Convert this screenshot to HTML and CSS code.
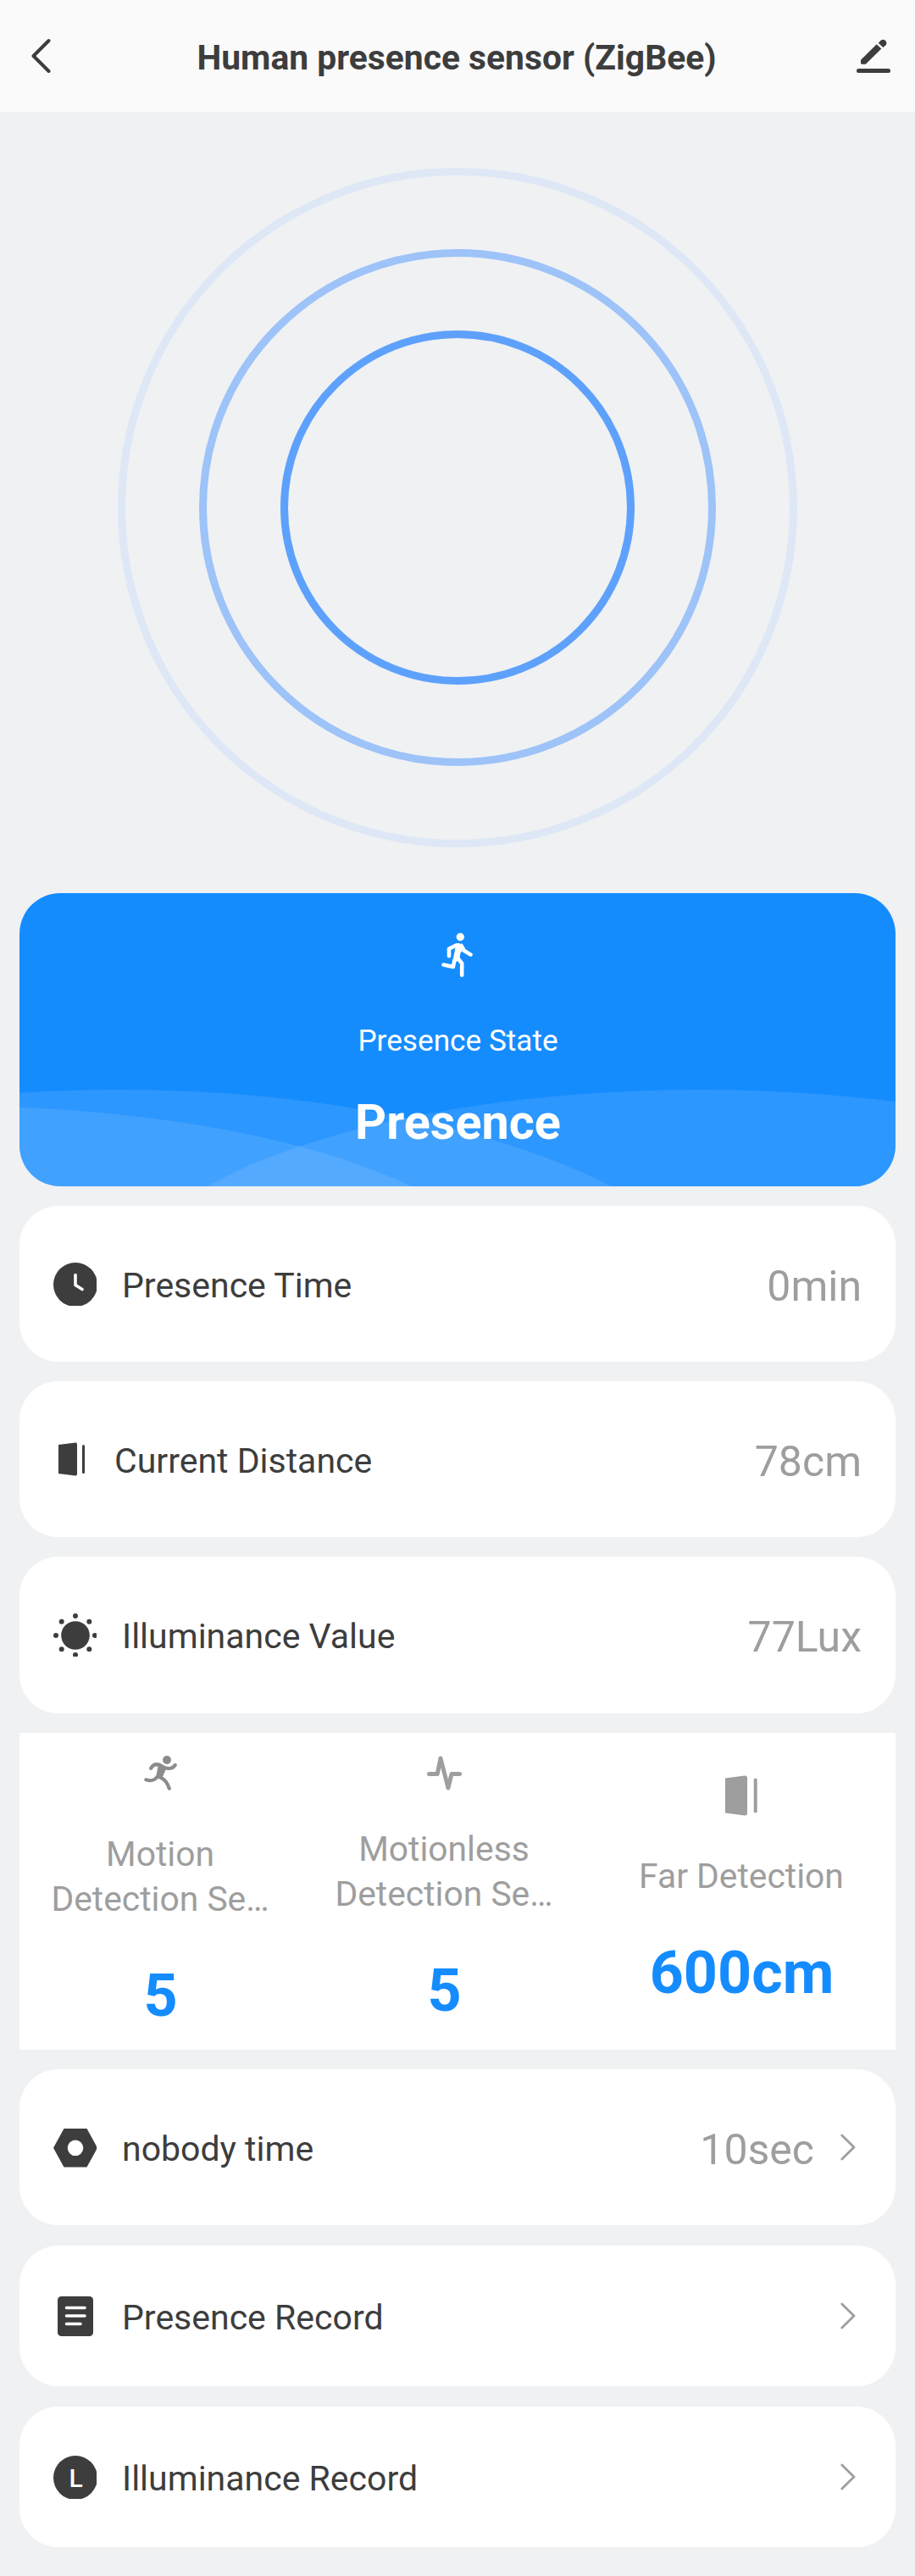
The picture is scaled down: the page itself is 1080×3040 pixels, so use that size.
FILE: index.html
```html
<!DOCTYPE html>
<html lang="en">
<head>
<meta charset="utf-8">
<title>Human presence sensor (ZigBee)</title>
<link rel="stylesheet" href="styles.css">
</head>
<body>
<header class="topbar">
  <svg class="back" viewBox="0 0 24 42" width="24" height="42"><path d="M21.5 3 3.5 21l18 18"/></svg>
  <h1 class="title">Human presence sensor (ZigBee)</h1>
  <svg class="edit" viewBox="0 0 40 40" width="40" height="40">
    <path d="M5 24.700 23.700 6.300l5.600 5.200L10.800 29.700H5.800l-.8-.8z"/>
    <path d="M25.700 4.700 28.600 1.700q3-2.300 5.600.400 2.500 2.700.100 5.500L31.400 10z"/>
    <rect x="0" y="35" width="40" height="5" rx="2.500"/>
  </svg>
</header>

<section class="radar">
  <div class="ring ring-outer"><div class="ring ring-middle"><div class="ring ring-inner"></div></div></div>
</section>

<main class="cards">
  <section class="state">
    <svg class="waves" viewBox="23 1054 1034 346" width="1034" height="346">
      <ellipse cx="141" cy="1590" rx="744" ry="304"/>
      <ellipse cx="826" cy="1529" rx="686" ry="243"/>
      <path d="M23 1306.700C200 1314 370 1345 485.500 1400H23z"/>
    </svg>
    <svg class="walker" viewBox="0 0 38 53" width="38" height="53">
      <circle cx="22.300" cy="4.700" r="4.700"/>
      <path class="limb" d="M16.500 15 9 18.800v8.500M23.500 15l3.500 6 7.500 4.600M15.500 32l-1.700 8-11.300-2.500M18.500 29l5.700 6.800V49.700"/>
      <path d="M15.500 13.200c4-2.200 7.800-1.200 9.200 2.300l1.300 4.500-3.500 3.500-.8 5.500-3.700 5h-4.700l3.200-17z"/>
    </svg>
    <p class="state-label">Presence State</p>
    <p class="state-value">Presence</p>
  </section>

  <section class="row">
    <svg class="icon" viewBox="0 0 51 51" width="51" height="51"><circle cx="26" cy="26" r="26"/><path class="cut" d="M26 14.500v12l8 5"/></svg>
    <span class="label">Presence Time</span><span class="value">0min</span>
  </section>

  <section class="row">
    <svg class="icon icon-door" viewBox="0 0 42 40" width="42" height="40"><path d="M6 3 26 .5q2-.2 2 2v35q0 2.200-2 2L6 37z"/><rect x="34" y="3" width="3" height="34" rx="1.500"/></svg>
    <span class="label">Current Distance</span><span class="value">78cm</span>
  </section>

  <section class="row row-illuminance">
    <svg class="icon" viewBox="0 0 51 51" width="51" height="51"><circle cx="26" cy="26" r="16.800"/><circle cx="26" cy="3" r="3"/><circle cx="3" cy="26" r="3"/><circle cx="49" cy="26" r="3"/><circle cx="26" cy="49" r="3"/><circle cx="9.700" cy="9.700" r="3"/><circle cx="42.300" cy="9.700" r="3"/><circle cx="9.700" cy="42.300" r="3"/><circle cx="42.300" cy="42.300" r="3"/></svg>
    <span class="label">Illuminance Value</span><span class="value">77Lux</span>
  </section>

  <section class="detection">
    <div class="metric metric-motion">
      <svg class="runner" viewBox="0 0 39 41" width="39" height="41">
        <circle cx="27" cy="5" r="5"/>
        <path class="limb" d="M8.200 14.800c2.500-4.600 6.800-5.300 11-3.600 6.500 4.300 13.500 5.800 17.500-.2M2.300 28.300c6 2 10 1.200 14-4M18.500 25.200c6.500 3 9 6.500 11.300 13.500"/>
        <path d="M17 10l9.500 4.500-5.500 12.500-7-1.500z"/>
      </svg>
      <p class="metric-name">Motion<br>Detection Se…</p>
      <p class="metric-value">5</p>
    </div>
    <div class="metric metric-motionless">
      <svg class="pulse" viewBox="0 0 41 41" width="41" height="41"><path d="M2.500 21.500h9.800L16 3l9 35 4-16.500h9.500"/></svg>
      <p class="metric-name">Motionless<br>Detection Se…</p>
      <p class="metric-value">5</p>
    </div>
    <div class="metric metric-far">
      <svg class="far" viewBox="0 0 38 48" width="38" height="48"><path d="M0 3.500 23 .5q3-.2 3 3v41q0 3.200-3 3L0 44.500z"/><rect x="33.700" y="3.500" width="4" height="41" rx="2"/></svg>
      <p class="metric-name">Far Detection</p>
      <p class="metric-value">600cm</p>
    </div>
  </section>

  <section class="row">
    <svg class="icon" viewBox="0 0 51 51" width="51" height="51"><path fill-rule="evenodd" d="M12.500 3h27L52 25.800 39.500 48.500h-27L0 25.800zM26 16.500a9.300 9.300 0 1 0 0 18.600 9.300 9.300 0 0 0 0-18.600z"/></svg>
    <span class="label">nobody time</span><span class="value">10sec</span>
    <svg class="chevron" viewBox="0 0 18 32" width="18" height="32"><path d="M1.800 2 16 16 1.800 30"/></svg>
  </section>

  <section class="row row-record">
    <svg class="icon" viewBox="0 0 51 51" width="51" height="51"><rect x="5" y="2" width="42" height="47" rx="4.500"/><path class="cut" d="M15.500 15.500h21.500M15.500 25h21.500M15.500 34.500H32"/></svg>
    <span class="label">Presence Record</span>
    <svg class="chevron" viewBox="0 0 18 32" width="18" height="32"><path d="M1.800 2 16 16 1.800 30"/></svg>
  </section>

  <section class="row row-record">
    <svg class="icon" viewBox="0 0 51 51" width="51" height="51"><circle cx="26" cy="26" r="26"/><text class="letter" x="18.500" y="37">L</text></svg>
    <span class="label">Illuminance Record</span>
    <svg class="chevron" viewBox="0 0 18 32" width="18" height="32"><path d="M1.800 2 16 16 1.800 30"/></svg>
  </section>
</main>
</body>
</html>
```
FILE: styles.css
```css
* {
  box-sizing: border-box;
}

body {
  margin: 0;
  width: 1080px;
  height: 3040px;
  background: #eff1f3;
  color: #3d3d3d;
  font-family: Roboto, "Liberation Sans", sans-serif;
}

h1, p {
  margin: 0;
}

svg {
  display: block;
  flex: none;
}

.topbar {
  display: flex;
  align-items: center;
  justify-content: space-between;
  height: 132px;
  padding: 0 29px 0 36px;
  background: #fafafa;
}

.title {
  font-size: 40.8px;
  font-weight: 700;
  line-height: 48px;
  padding: 4px 0 0 7px;
}

.back {
  fill: none;
  stroke: #3d3d3d;
  stroke-width: 4;
  stroke-linecap: round;
  stroke-linejoin: round;
}

.edit {
  fill: #3d3d3d;
}

.radar {
  display: flex;
  justify-content: center;
  height: 922px;
  padding-top: 66px;
}

.ring {
  display: flex;
  align-items: center;
  justify-content: center;
  flex: none;
  border: 9px solid;
  border-radius: 50%;
}

.ring-outer {
  width: 802px;
  height: 802px;
  border-color: #dee7f5;
}

.ring-middle {
  width: 610px;
  height: 610px;
  border-color: #9dc3f8;
}

.ring-inner {
  width: 418px;
  height: 418px;
  border-color: #5ea1fc;
}

.cards {
  display: flex;
  flex-direction: column;
  gap: 23px;
  padding: 0 23px;
}

.state {
  position: relative;
  display: flex;
  flex-direction: column;
  align-items: center;
  height: 346px;
  padding-top: 47px;
  border-radius: 48px;
  overflow: hidden;
  background: #158cfe;
  color: #fff;
}

.waves {
  position: absolute;
  inset: 0;
  fill: rgba(255, 255, 255, 0.1);
}

.walker {
  fill: #fff;
  position: relative;
}

.walker .limb {
  fill: none;
  stroke: #fff;
  stroke-width: 4.6;
  stroke-linecap: round;
  stroke-linejoin: round;
}

.state-label {
  position: relative;
  margin-top: 54px;
  padding-left: 1px;
  font-size: 35.2px;
  line-height: 40px;
}

.state-value {
  position: relative;
  margin-top: 44px;
  padding-left: 1px;
  font-size: 57.6px;
  font-weight: 700;
  line-height: 66px;
}

.row {
  display: flex;
  align-items: center;
  height: 184px;
  padding: 0 40px;
  border-radius: 46px;
  background: #fff;
}

.row-illuminance {
  height: 185px;
  padding-bottom: 1px;
}

.row-record {
  height: 166px;
  margin-top: 1px;
}

.icon {
  fill: #3d3d3d;
}

.cut {
  fill: none;
  stroke: #fff;
  stroke-width: 3.6;
  stroke-linecap: round;
  stroke-linejoin: round;
}

.letter {
  fill: #fff;
  font-size: 30px;
  font-weight: 500;
}

.label {
  flex: 1;
  padding: 4px 0 0 30px;
  font-size: 41px;
  line-height: 48px;
}

.row-record .label {
  padding-top: 3px;
}

.value {
  padding-top: 5px;
  color: #9e9e9e;
  font-size: 50px;
  line-height: 58px;
}

.chevron {
  margin: 0 7px 0 31px;
  fill: none;
  stroke: #9e9e9e;
  stroke-width: 2.8;
  stroke-linecap: round;
  stroke-linejoin: round;
}

.detection {
  display: grid;
  grid-template-columns: 332px 338px 364px;
  height: 374px;
  background: #fff;
  color: #9e9e9e;
}

.metric {
  display: flex;
  flex-direction: column;
  align-items: center;
  text-align: center;
}

.metric-motion,
.metric-motionless {
  padding-top: 27px;
}

.metric-far {
  padding-top: 50px;
}

.metric-name {
  margin-top: 49px;
  font-size: 40.8px;
  line-height: 53px;
}

.metric-motionless .metric-name {
  margin-top: 43px;
}

.metric-far .metric-name {
  margin-top: 45px;
}

.metric-value {
  margin-top: 46px;
  padding-left: 1px;
  color: #158cfe;
  font-size: 70px;
  font-weight: 700;
  line-height: 82px;
}

.runner {
  fill: #8c8c8c;
}

.runner .limb {
  fill: none;
  stroke: #8c8c8c;
  stroke-width: 4.2;
  stroke-linecap: round;
  stroke-linejoin: round;
}

.pulse {
  fill: none;
  stroke: #9e9e9e;
  stroke-width: 5;
  stroke-linecap: round;
  stroke-linejoin: round;
}

.far {
  fill: #9e9e9e;
}
```
